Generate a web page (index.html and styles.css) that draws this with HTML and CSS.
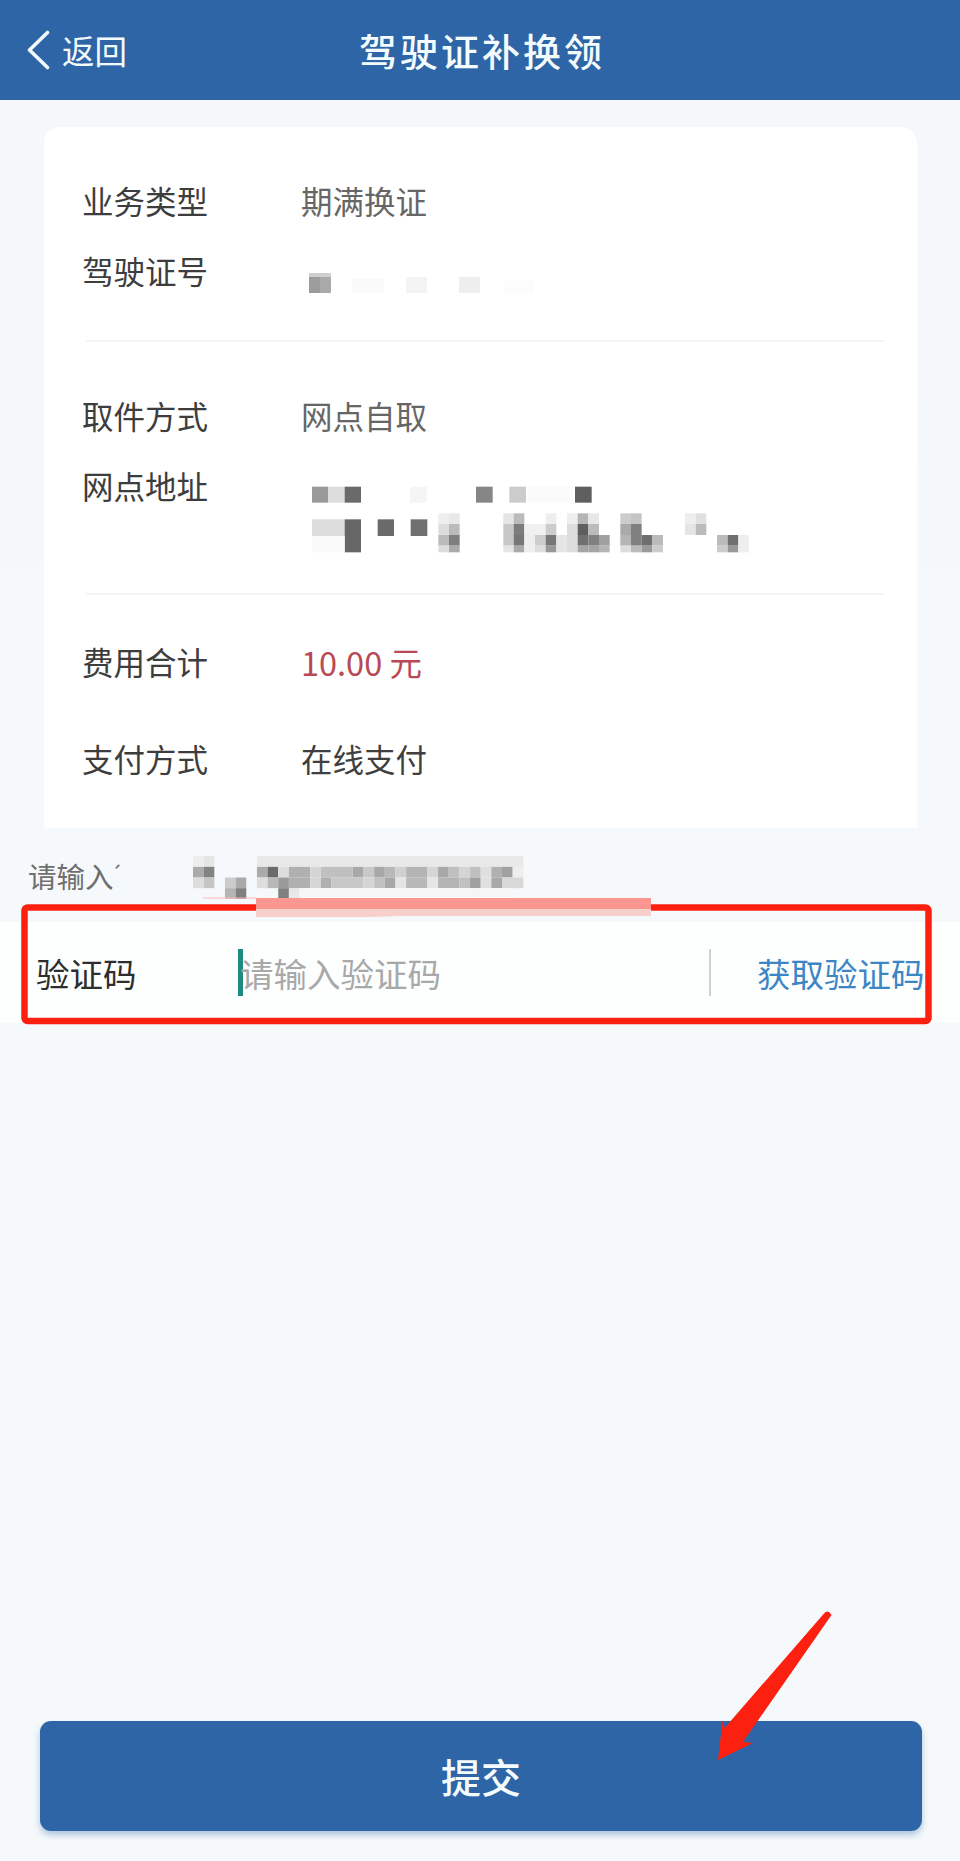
FILE: index.html
```html
<!DOCTYPE html>
<html lang="zh-CN">
<head>
<meta charset="utf-8">
<title>驾驶证补换领</title>
<link rel="stylesheet" href="styles.css">
</head>
<body>
<div class="page">
  <header class="topbar">
    <a class="back">
      <svg class="chevron" viewBox="0 0 24 40" width="24" height="40"><path d="M21.500 2.500 3.500 20l18 17.500"/></svg>
      <span>返回</span>
    </a>
    <h1 class="title">驾驶证补换领</h1>
    <span></span>
  </header>

  <section class="card">
    <div class="group group-first">
      <div class="row"><span class="label">业务类型</span><span class="value">期满换证</span></div>
      <div class="row">
        <span class="label">驾驶证号</span>
        <svg class="mosaic-id" viewBox="0 0 240 60" width="240" height="60">
          <rect x="0" y="18" width="11" height="16" fill="#9c9c9c"/><rect x="11" y="18" width="11" height="16" fill="#aaa"/><rect x="0" y="14" width="22" height="4" fill="#cfcfcf"/>
          <rect x="43" y="20" width="32" height="14" fill="#fafafa"/><rect x="97" y="18" width="21" height="16" fill="#f3f3f3"/><rect x="150" y="18" width="21" height="16" fill="#eee"/>
          <rect x="195" y="22" width="30" height="12" fill="#fcfcfc"/>
        </svg>
      </div>
    </div>
    <div class="group group-second">
      <div class="row"><span class="label">取件方式</span><span class="value">网点自取</span></div>
      <div class="row row-address">
        <span class="label">网点地址</span>
        <svg class="mosaic-address" viewBox="0 0 1440 330" width="480" height="110">
          <rect x="66" y="80" width="49" height="48" fill="#999"/><rect x="115" y="80" width="49" height="48" fill="#ddd"/><rect x="164" y="80" width="49" height="48" fill="#6a6a6a"/><rect x="360" y="80" width="50" height="48" fill="#f5f5f5"/><rect x="558" y="80" width="50" height="48" fill="#868686"/><rect x="658" y="80" width="50" height="48" fill="#ccc"/><rect x="855" y="80" width="50" height="48" fill="#5f5f5f"/><rect x="710" y="80" width="140" height="48" fill="#fbfbfb"/>
          <rect x="66" y="178" width="98" height="50" fill="#ddd"/><rect x="164" y="178" width="49" height="99" fill="#676767"/><rect x="263" y="178" width="49" height="50" fill="#6a6a6a"/><rect x="362" y="178" width="50" height="50" fill="#6f6f6f"/><rect x="66" y="228" width="98" height="49" fill="#f9f9f9"/>
          <rect x="445" y="160" width="32" height="32" fill="#eee"/><rect x="477" y="160" width="32" height="32" fill="#e8e8e8"/><rect x="445" y="192" width="32" height="33" fill="#ddd"/><rect x="477" y="192" width="32" height="33" fill="#bbb"/><rect x="445" y="225" width="32" height="32" fill="#bbb"/><rect x="477" y="225" width="32" height="32" fill="#7f7f7f"/><rect x="445" y="257" width="32" height="20" fill="#ddd"/><rect x="477" y="257" width="32" height="20" fill="#aaa"/>
          <rect x="640" y="160" width="31" height="32" fill="#e5e5e5"/><rect x="671" y="160" width="32" height="32" fill="#bbb"/><rect x="640" y="192" width="31" height="65" fill="#c8c8c8"/><rect x="671" y="192" width="32" height="33" fill="#7d7d7d"/><rect x="671" y="225" width="32" height="32" fill="#777"/><rect x="640" y="257" width="31" height="20" fill="#e5e5e5"/><rect x="671" y="257" width="32" height="20" fill="#aaa"/>
          <rect x="703" y="192" width="64" height="33" fill="#f0f0f0"/><rect x="703" y="225" width="32" height="52" fill="#eee"/><rect x="735" y="225" width="32" height="32" fill="#ccc"/><rect x="735" y="257" width="32" height="20" fill="#ddd"/>
          <rect x="767" y="160" width="32" height="32" fill="#eee"/><rect x="767" y="192" width="32" height="33" fill="#ccc"/><rect x="767" y="225" width="32" height="32" fill="#777"/><rect x="767" y="257" width="32" height="20" fill="#999"/>
          <rect x="799" y="225" width="32" height="52" fill="#e5e5e5"/><rect x="831" y="160" width="32" height="32" fill="#eee"/><rect x="831" y="192" width="32" height="85" fill="#ddd"/>
          <rect x="863" y="160" width="32" height="32" fill="#b5b5b5"/><rect x="863" y="192" width="32" height="33" fill="#5f5f5f"/><rect x="863" y="225" width="32" height="32" fill="#707070"/><rect x="863" y="257" width="32" height="20" fill="#a5a5a5"/>
          <rect x="895" y="160" width="32" height="32" fill="#e8e8e8"/><rect x="895" y="192" width="32" height="33" fill="#bbb"/><rect x="895" y="225" width="32" height="32" fill="#808080"/><rect x="895" y="257" width="32" height="20" fill="#a5a5a5"/>
          <rect x="927" y="225" width="32" height="32" fill="#a0a0a0"/><rect x="927" y="257" width="32" height="20" fill="#b5b5b5"/>
          <rect x="991" y="160" width="32" height="32" fill="#ccc"/><rect x="991" y="192" width="32" height="33" fill="#aaa"/><rect x="991" y="225" width="32" height="32" fill="#b5b5b5"/><rect x="991" y="257" width="32" height="20" fill="#ddd"/>
          <rect x="1023" y="160" width="32" height="32" fill="#c5c5c5"/><rect x="1023" y="192" width="32" height="65" fill="#808080"/><rect x="1023" y="257" width="32" height="20" fill="#bbb"/>
          <rect x="1055" y="225" width="32" height="32" fill="#6f6f6f"/><rect x="1055" y="257" width="32" height="20" fill="#999"/><rect x="1087" y="225" width="32" height="32" fill="#bbb"/><rect x="1087" y="257" width="32" height="20" fill="#ccc"/>
          <rect x="1185" y="160" width="32" height="32" fill="#eee"/><rect x="1185" y="192" width="32" height="33" fill="#e5e5e5"/><rect x="1217" y="160" width="32" height="32" fill="#e0e0e0"/><rect x="1217" y="192" width="32" height="33" fill="#bbb"/>
          <rect x="1281" y="225" width="32" height="32" fill="#bbb"/><rect x="1281" y="257" width="32" height="20" fill="#ccc"/><rect x="1313" y="225" width="32" height="32" fill="#6f6f6f"/><rect x="1313" y="257" width="32" height="20" fill="#999"/><rect x="1345" y="225" width="32" height="52" fill="#eee"/>
        </svg>
      </div>
    </div>
    <div class="group group-third">
      <div class="row row-tall"><span class="label">费用合计</span><span class="value value-price">10.00 元</span></div>
      <div class="row row-tall"><span class="label">支付方式</span><span class="value value-dark">在线支付</span></div>
    </div>
  </section>

  <div class="phone-row">
    <span class="phone-label">请输入<span class="phone-tick">´</span></span>
    <svg class="mosaic-phone" viewBox="0 0 1000 128" width="333" height="43">
      <rect x="0" y="0" width="32" height="32" fill="#eee"/><rect x="32" y="0" width="32" height="32" fill="#e5e5e5"/><rect x="0" y="32" width="32" height="32" fill="#aaa"/><rect x="32" y="32" width="32" height="32" fill="#828282"/><rect x="0" y="64" width="32" height="32" fill="#ddd"/><rect x="32" y="64" width="32" height="32" fill="#c5c5c5"/>
      <rect x="96" y="64" width="32" height="32" fill="#ccc"/><rect x="128" y="64" width="32" height="32" fill="#aaa"/><rect x="96" y="96" width="32" height="32" fill="#b5b5b5"/><rect x="128" y="96" width="32" height="32" fill="#808080"/>
      <rect x="256" y="96" width="32" height="32" fill="#808080"/><rect x="288" y="96" width="32" height="32" fill="#e8e8e8"/>
      <g>
        <rect x="192" y="0" width="800" height="32" fill="#e8e8e8"/>
        <rect x="192" y="32" width="32" height="32" fill="#aaa"/><rect x="224" y="32" width="32" height="32" fill="#6a6a6a"/><rect x="256" y="32" width="32" height="32" fill="#ddd"/><rect x="288" y="32" width="64" height="32" fill="#b0b0b0"/><rect x="352" y="32" width="32" height="32" fill="#d5d5d5"/><rect x="384" y="32" width="96" height="32" fill="#c0c0c0"/><rect x="480" y="32" width="32" height="32" fill="#a8a8a8"/><rect x="512" y="32" width="32" height="32" fill="#c8c8c8"/><rect x="544" y="32" width="32" height="32" fill="#a8a8a8"/><rect x="576" y="32" width="32" height="32" fill="#b8b8b8"/><rect x="608" y="32" width="32" height="32" fill="#d0d0d0"/><rect x="640" y="32" width="64" height="32" fill="#b4b4b4"/><rect x="704" y="32" width="32" height="32" fill="#d5d5d5"/><rect x="736" y="32" width="32" height="32" fill="#a8a8a8"/><rect x="768" y="32" width="32" height="32" fill="#c0c0c0"/><rect x="800" y="32" width="32" height="32" fill="#d5d5d5"/><rect x="832" y="32" width="32" height="32" fill="#c0c0c0"/><rect x="864" y="32" width="32" height="32" fill="#e0e0e0"/><rect x="896" y="32" width="32" height="32" fill="#b0b0b0"/><rect x="928" y="32" width="32" height="32" fill="#a0a0a0"/><rect x="960" y="32" width="32" height="32" fill="#eee"/>
        <rect x="192" y="64" width="32" height="32" fill="#ddd"/><rect x="224" y="64" width="32" height="32" fill="#b8b8b8"/><rect x="256" y="64" width="32" height="32" fill="#9a9a9a"/><rect x="288" y="64" width="64" height="32" fill="#b0b0b0"/><rect x="352" y="64" width="32" height="32" fill="#d5d5d5"/><rect x="384" y="64" width="32" height="32" fill="#b0b0b0"/><rect x="416" y="64" width="96" height="32" fill="#c8c8c8"/><rect x="512" y="64" width="32" height="32" fill="#d5d5d5"/><rect x="544" y="64" width="32" height="32" fill="#c0c0c0"/><rect x="576" y="64" width="32" height="32" fill="#a8a8a8"/><rect x="608" y="64" width="32" height="32" fill="#e5e5e5"/><rect x="640" y="64" width="64" height="32" fill="#b8b8b8"/><rect x="704" y="64" width="32" height="32" fill="#e5e5e5"/><rect x="736" y="64" width="64" height="32" fill="#b4b4b4"/><rect x="800" y="64" width="32" height="32" fill="#c0c0c0"/><rect x="832" y="64" width="32" height="32" fill="#a0a0a0"/><rect x="864" y="64" width="32" height="32" fill="#e0e0e0"/><rect x="896" y="64" width="32" height="32" fill="#a8a8a8"/><rect x="928" y="64" width="64" height="32" fill="#d8d8d8"/>
        <rect x="320" y="96" width="640" height="26" fill="#f6f6f6"/>
      </g>
    </svg>
  </div>

  <div class="code-row">
    <span class="code-label">验证码</span>
    <span class="caret"></span>
    <span class="code-placeholder">请输入验证码</span>
    <span class="code-divider"></span>
    <a class="code-link">获取验证码</a>
  </div>

  <button class="submit" type="button">提交</button>

  <svg class="marks" viewBox="0 0 960 1861" width="960" height="1861">
    <rect class="mark-box" x="24.500" y="907.500" width="904" height="113.500" rx="3"/>
    <rect class="mark-hairline" x="203" y="897.500" width="53" height="1"/>
    <rect class="mark-strip" x="256" y="898" width="395" height="11"/>
    <path class="mark-strip-pale" d="M256 909h395v7H400l-30 1H256z"/>
    <path class="mark-arrow" d="M824 1613.500Q828 1609 831.500 1615L743 1742l10 1-35 17 4.600-40 2 8z"/>
  </svg>
</div>
</body>
</html>
```

FILE: styles.css
```css
* { box-sizing: border-box; }
html, body { margin: 0; padding: 0; }
body {
  font-family: "Noto Sans CJK SC", "Noto Sans", sans-serif;
  background: #f5f9fb;
}
.page {
  position: relative;
  width: 960px;
  height: 1861px;
  display: flex;
  flex-direction: column;
  overflow: hidden;
  background: linear-gradient(#f5f7fa, #f5f9fb 45%);
}
.topbar {
  height: 100px;
  flex: none;
  background: #2d65a6;
  color: #f4fbfd;
  display: grid;
  grid-template-columns: 1fr auto 1fr;
  align-items: center;
}
.back {
  display: flex;
  align-items: center;
  gap: 12px;
  padding-left: 26px;
  font-size: 32.500px;
  line-height: 1;
}
.chevron { fill: none; stroke: #f4fbfd; stroke-width: 3.600; stroke-linecap: round; stroke-linejoin: round; }
.title {
  margin: 0;
  padding-left: 4px;
  font-size: 38px;
  font-weight: 500;
  letter-spacing: 3px;
  line-height: 1;
}
.card {
  flex: none;
  margin: 27px 43px 0 44px;
  height: 701px;
  background: #fff;
  border-radius: 16px 16px 0 0;
  padding: 0 32px 0 39px;
}
.group-first { padding-top: 38px; height: 215px; border-bottom: 2px solid #f4f5f6; margin-left: 3px; }
.group-second { padding-top: 38px; height: 253px; border-bottom: 2px solid #f4f5f6; margin-left: 3px; }
.group-third { padding-top: 18px; margin-left: 3px; }
.group .label { margin-left: -4px; }
.row {
  display: flex;
  align-items: flex-start;
  height: 70px;
  line-height: 70px;
  font-size: 31.500px;
  position: relative;
}
.row-tall { height: 97px; line-height: 97px; }
.label { width: 219px; flex: none; color: #3d3d3d; }
.value { color: #666; }
.value-dark { color: #3f3f3f; }
.value-price { color: #b94a55; font-size: 32.500px; }
.mosaic-id { margin-top: 24px; margin-left: 8px; filter: blur(0.6px); }
.row-address { height: 142px; }
.mosaic-address { margin-top: 10px; margin-left: -11px; filter: blur(0.7px); flex: none; }
.phone-row {
  flex: none;
  height: 94px;
  display: flex;
  align-items: center;
  padding-left: 28px;
}
.phone-label { width: 165px; flex: none; font-size: 28.500px; color: #6f6f6f; }
.phone-tick { font-size: 20px; margin-left: -3px; vertical-align: 6px; }
.mosaic-phone { filter: blur(0.7px); margin-top: 5px; }
.code-row {
  flex: none;
  height: 101px;
  background: #fdfefe;
  display: flex;
  align-items: center;
  padding-left: 36px;
  font-size: 33.500px;
}
.code-label { width: 202px; flex: none; color: #2e2e2e; }
.caret { width: 5px; height: 47px; flex: none; background: #1f8a80; margin-right: -3px; }
.code-placeholder { flex: none; width: 469px; color: #a8a8a8; }
.code-divider { width: 2px; height: 47px; flex: none; background: #d0d0d0; margin-right: 46px; }
.code-link { color: #3d86c6; white-space: nowrap; }
.submit {
  flex: none;
  margin: auto 38px 30px 40px;
  height: 110px;
  border: 0;
  border-radius: 11px;
  background: #2d65a6;
  color: #f4fbfd;
  font: 500 40px/1 "Noto Sans CJK SC", "Noto Sans", sans-serif;
  box-shadow: 0 4px 6px rgba(45, 101, 166, 0.35);
}
.marks { position: absolute; left: 0; top: 0; pointer-events: none; }
.mark-box { fill: none; stroke: #fb2010; stroke-width: 6.500; }
.mark-hairline { fill: #fbb9b4; }
.mark-strip { fill: #fb9690; }
.mark-strip-pale { fill: #f9cfcb; }
.mark-arrow { fill: #fb2010; }
```
